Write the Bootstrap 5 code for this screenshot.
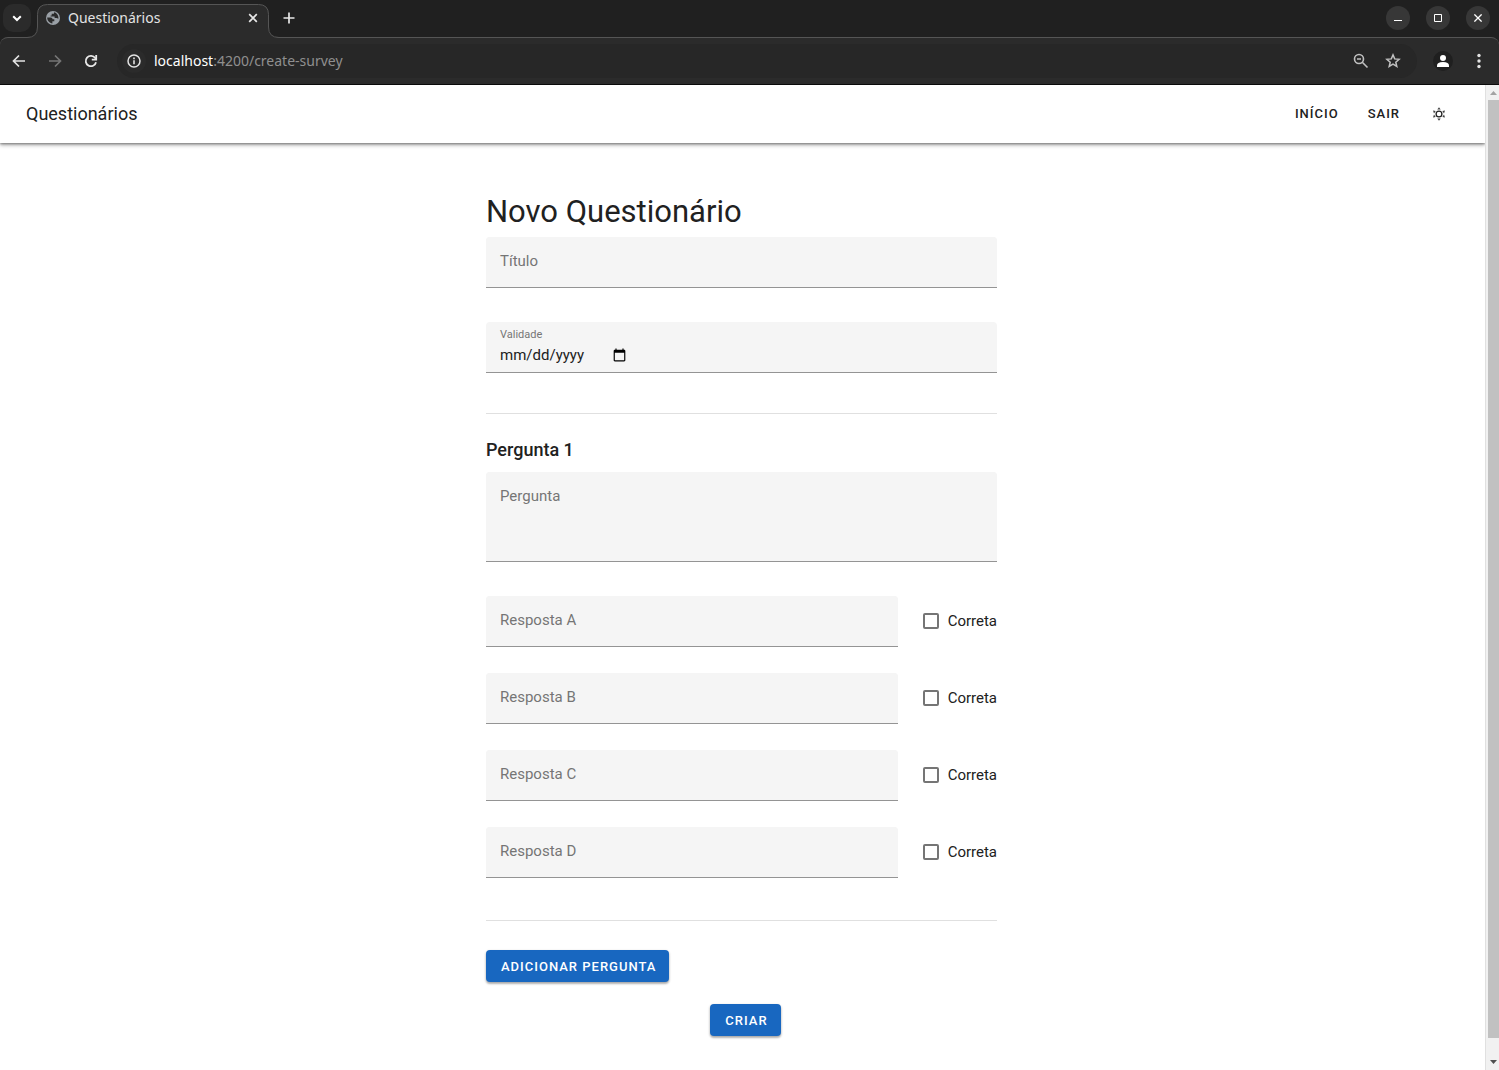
<!DOCTYPE html>
<html lang="pt-BR">
<head>
<meta charset="utf-8">
<meta name="viewport" content="width=device-width, initial-scale=1">
<title>Questionários</title>
<link href="https://cdn.jsdelivr.net/npm/bootstrap@5.3.0/dist/css/bootstrap.min.css" rel="stylesheet">
<style>
  body { font-family: Roboto, "Liberation Sans", sans-serif; font-size: 15px; line-height: 20px; color: #212121; background: #fff; }
  svg { display: block; }

  /* browser window */
  .browser-top { background: #202020; color: #e3e3e3; font-family: "Noto Sans", sans-serif; font-size: 14px; }
  .tab-strip { height: 37px; padding: 0 9px 1px 3px; }
  .ghost-btn { background: transparent; border: 0; padding: 0; color: inherit; display: flex; align-items: center; justify-content: center; flex: none; }
  .tab-search { width: 28px; height: 28px; border-radius: 10px; background: #2b2b2b; }
  .tab-item { width: 252px; height: 37px; margin-left: -4px; padding: 0 18px 1px 19px; }
  .tab-outline { position: absolute; left: 0; top: 0; }
  .tab-close { width: 16px; height: 16px; }
  .tab-add { margin-left: 2px; }
  .window-btn { width: 24px; height: 24px; border-radius: 50%; background: #373737; color: #fff; }
  .tool-row { height: 48px; background: #2b2b2b; border-top: 1px solid #555; border-bottom: 1px solid #0c0c0c; border-radius: 8px 8px 0 0; padding: 0 2px 0 1px; }
  .tool-btn { width: 36px; height: 34px; }
  .address-bar { height: 34px; border-radius: 17px; background: #272727; padding: 0 8px 0 5px; margin: 0 8px; }
  .address-btn { width: 32px; height: 34px; color: #c0c0c0; }
  .info-btn { width: 24px; height: 24px; border-radius: 50%; background: #2b2b2b; }
  .url-rest { color: #8f8f8f; }

  /* application */
  .app-bar { height: 58px; padding: 0 28px 0 26px; box-shadow: 0 2px 4px rgba(0,0,0,.35), 0 1px 2px rgba(0,0,0,.3); background: #fff; }
  .app-name { font-size: 18px; line-height: 24px; color: #212121; }
  .caps { font-size: 13px; line-height: 16px; font-weight: 500; letter-spacing: 1px; text-transform: uppercase; }
  .app-links { gap: 29px; margin-right: 21px; }
  .app-link { color: #212121; text-decoration: none; }
  .app-toggle { width: 36px; height: 36px; color: #212121; }
  .app-main { padding-right: 2px; }
  .survey-form { width: 511px; max-width: 100%; padding: 51px 0 34px; }
  .page-title { font-size: 31px; line-height: 36px; font-weight: 400; margin: 0 0 7px; }
  .question-title { font-size: 18px; line-height: 24px; font-weight: 500; margin: 24px 0 10px; }
  .rule { height: 1px; margin: 40px 0 0; border: 0; background: #e0e0e0; opacity: 1; }
  .rule-end { margin: 42px 0 29px; }

  .filled, .filled > .form-control { background: #f5f5f5; border-radius: 4px 4px 0 0; }
  .filled > .form-control, .date-box { height: 51px; min-height: 51px; border: 0; border-bottom: 1px solid #949494; box-shadow: none; color: #212121; }
  .filled > .form-control { padding: 20px 14px 6px; font-size: 15px; line-height: 20px; }
  .filled > .form-control.long-text { height: 90px; resize: none; }
  .form-floating.filled > label { padding: 13px; height: auto; font-size: 15px; line-height: 20px; color: #757575; }
  .date-box { padding: 7px 14px 0; }
  .date-box label { font-size: 11px; line-height: 12px; color: #757575; }
  .date-box input { align-self: flex-start; width: 129px; height: 28px; padding: 0; border: 0; background: transparent; font-size: 15px; line-height: 28px; color: #212121; }
  .stack-gap { margin-top: 34px; }
  .answers { gap: 26px; }
  .tick { gap: 9px; padding: 0; margin: 0 0 0 25px; min-height: 0; height: 49px; align-self: flex-start; }
  .tick .form-check-input { width: 16px; height: 16px; margin: 0; float: none; border: 2px solid #757575; border-radius: 2px; }
  .action-btn { height: 32px; padding: 1px 13px 0 15px; border: 0; border-radius: 4px; background: #1867c0; color: #fff; box-shadow: 0 2px 2px rgba(0,0,0,.22), 0 1px 3px rgba(0,0,0,.2); }
  .submit-row { margin-top: 22px; }

  .scroll-track { width: 14px; background: #f1f1f1; border-left: 1px solid #e0e0e0; }
  .scroll-arrow { height: 15px; padding-right: 2px; }
  .scroll-end { height: 32px; padding: 22px 2px 0 0; }
  .scroll-thumb { width: 11px; background: #c1c1c1; }
</style>
<script src="https://cdn.jsdelivr.net/npm/bootstrap@5.3.0/dist/js/bootstrap.bundle.min.js"></script>
</head>
<body class="d-flex flex-column min-vh-100">

<header class="browser-top">
  <div class="tab-strip d-flex align-items-center">
    <button class="ghost-btn tab-search" aria-label="Pesquisar guias"><svg width="12" height="12" viewBox="0 0 12 12" fill="none" stroke="#fff" stroke-width="2"><path d="M2.2 4.2 6 8l3.8-3.8"/></svg></button>
    <div class="tab-item position-relative d-flex align-items-center align-self-start">
      <svg class="tab-outline" width="252" height="38" viewBox="0 0 252 38"><path d="M0 38V37.5Q10.500 37.500 10.500 27V14.500Q10.500 4.500 20.500 4.500H231.500Q241.500 4.500 241.500 14.500V27Q241.500 37.500 252 37.500V38Z" fill="#2b2b2b"/><path d="M0 37.500Q10.500 37.500 10.500 27V14.500Q10.500 4.500 20.500 4.500H231.500Q241.500 4.500 241.500 14.500V27Q241.500 37.500 252 37.500" fill="none" stroke="#555"/></svg>
      <svg class="position-relative flex-shrink-0" width="14" height="14" viewBox="0 0 14 14"><circle cx="7" cy="7" r="7" fill="#9aa0a6"/><path d="M1.200 6.500h3.500q1.900 0 1.900 1.800h1.700v1.900H6.400v2.200C3.500 12.300 1.200 9.600 1.200 6.500ZM8 1.200v1.500H5.700v1.700H4.600V5.600h4v1.500h2l1.800.6C12.800 4.500 10.800 1.800 8 1.200Z" fill="#2b2b2b"/></svg>
      <span class="position-relative ms-2 flex-grow-1">Questionários</span>
      <button class="ghost-btn tab-close position-relative" aria-label="Fechar guia"><svg width="10" height="10" viewBox="0 0 10 10" stroke="#e8e8e8" stroke-width="1.700"><path d="m1.200 1.200 7.600 7.600m0-7.600-7.600 7.600"/></svg></button>
    </div>
    <button class="ghost-btn tab-close tab-add" aria-label="Nova guia"><svg width="12" height="12" viewBox="0 0 12 12" stroke="#e8e8e8" stroke-width="1.700"><path d="M6 .5v11M.5 6h11"/></svg></button>
    <div class="d-flex gap-3 ms-auto">
      <button class="ghost-btn window-btn" aria-label="Minimizar"><svg width="10" height="10" viewBox="0 0 10 10"><path d="M1 7h8v1H1z" fill="#fff"/></svg></button>
      <button class="ghost-btn window-btn" aria-label="Maximizar"><svg width="8" height="8" viewBox="0 0 8 8"><path d="M.5.5h7v7h-7z" fill="none" stroke="#fff"/></svg></button>
      <button class="ghost-btn window-btn" aria-label="Fechar"><svg width="8" height="8" viewBox="0 0 8 8" stroke="#fff" stroke-width="1.300"><path d="m.4.4 7.200 7.200m0-7.200L.4 7.600"/></svg></button>
    </div>
  </div>
  <div class="tool-row d-flex align-items-center">
    <button class="ghost-btn tool-btn" aria-label="Voltar"><svg width="14" height="14" viewBox="0 0 14 14" fill="none" stroke="#e3e3e3" stroke-width="1.700"><path d="M13 7H2M7 1.500 1.500 7 7 12.500"/></svg></button>
    <button class="ghost-btn tool-btn" aria-label="Avançar"><svg width="14" height="14" viewBox="0 0 14 14" fill="none" stroke="#757575" stroke-width="1.700"><path d="M1 7h11M7 1.500 12.500 7 7 12.500"/></svg></button>
    <button class="ghost-btn tool-btn" aria-label="Recarregar"><svg width="14" height="14" viewBox="0 0 14 14" fill="none" stroke="#e8e8e8" stroke-width="1.800"><path d="M12 8.200A5.200 5.200 0 1 1 11.200 4L12.500 5.500"/><path d="M12.200 1v4.700H7.800"/></svg></button>
    <div class="address-bar d-flex align-items-center flex-grow-1">
      <button class="ghost-btn info-btn" aria-label="Informações do site"><svg width="14" height="14" viewBox="0 0 14 14"><circle cx="7" cy="7" r="6" fill="none" stroke="#e3e3e3" stroke-width="1.500"/><path d="M6.200 6.200h1.600v4H6.200zM6.200 3.600h1.600v1.600H6.200z" fill="#e3e3e3"/></svg></button>
      <div class="ms-2 flex-grow-1 text-nowrap" role="textbox" aria-label="Endereço"><span class="text-white">localhost</span><span class="url-rest">:4200/create-survey</span></div>
      <button class="ghost-btn address-btn" aria-label="Zoom"><svg width="16" height="16" viewBox="0 0 16 16" fill="none" stroke="currentColor" stroke-width="1.600"><circle cx="6" cy="6" r="4.500"/><path d="m9.300 9.300 5.200 5.200M4 6h4"/></svg></button>
      <button class="ghost-btn address-btn" aria-label="Favoritar"><svg width="16" height="16" viewBox="0 0 16 16" fill="none" stroke="currentColor" stroke-width="1.500"><path d="m8 1.900 1.700 4 4.400.4-3.300 2.900 1 4.300L8 11.200l-3.800 2.300 1-4.300-3.300-2.900 4.400-.4z"/></svg></button>
    </div>
    <button class="ghost-btn tool-btn" aria-label="Perfil"><svg width="20" height="20" viewBox="0 0 20 20"><circle cx="10" cy="10" r="10" fill="#1f1f1f"/><circle cx="10" cy="7" r="3" fill="#fff"/><path d="M4 16v-1.500Q4 11 10 11t6 3.500V16Z" fill="#fff"/></svg></button>
    <button class="ghost-btn tool-btn" aria-label="Menu"><svg width="4" height="16" viewBox="0 0 4 16" fill="#e3e3e3"><circle cx="2" cy="2.500" r="1.700"/><circle cx="2" cy="8" r="1.700"/><circle cx="2" cy="13.500" r="1.700"/></svg></button>
  </div>
</header>

<div class="d-flex flex-grow-1">
  <div class="flex-grow-1">
    <nav class="app-bar d-flex align-items-center" aria-label="Principal">
      <a class="app-name text-decoration-none me-auto" href="#">Questionários</a>
      <div class="app-links d-flex">
        <a class="app-link caps" href="#">Início</a>
        <a class="app-link caps" href="#">Sair</a>
      </div>
      <button class="ghost-btn app-toggle" aria-label="Alternar tema"><svg width="14" height="14" viewBox="0 0 14 14"><circle cx="7" cy="7" r="2.900" fill="none" stroke="currentColor" stroke-width="1.300"/><path d="M7 .3 8.700 2.600H5.300ZM7 13.700l1.700-2.300H5.300ZM1 3.500l2.700.5L2 6.500ZM13 3.500l-2.700.5L12 6.500ZM1 10.500l2.700-.5L2 7.500ZM13 10.500l-2.700-.5L12 7.500Z" fill="currentColor" opacity=".85"/></svg></button>
    </nav>

    <main class="app-main d-flex justify-content-center">
      <form class="survey-form">
        <h1 class="page-title">Novo Questionário</h1>
        <div class="form-floating filled">
          <input type="text" class="form-control" id="titulo" placeholder=" ">
          <label for="titulo">Título</label>
        </div>
        <div class="filled date-box stack-gap d-flex flex-column">
          <label for="validade">Validade</label>
          <input type="date" id="validade">
        </div>
        <hr class="rule">

        <h2 class="question-title">Pergunta 1</h2>
        <div class="form-floating filled">
          <textarea class="form-control long-text" id="pergunta" placeholder=" "></textarea>
          <label for="pergunta">Pergunta</label>
        </div>

        <div class="answers stack-gap d-flex flex-column">
          <div class="d-flex align-items-center">
            <div class="form-floating filled flex-grow-1"><input type="text" class="form-control" id="ra" placeholder=" "><label for="ra">Resposta A</label></div>
            <div class="form-check tick d-flex align-items-center"><input class="form-check-input" type="checkbox" id="ca"><label for="ca">Correta</label></div>
          </div>
          <div class="d-flex align-items-center">
            <div class="form-floating filled flex-grow-1"><input type="text" class="form-control" id="rb" placeholder=" "><label for="rb">Resposta B</label></div>
            <div class="form-check tick d-flex align-items-center"><input class="form-check-input" type="checkbox" id="cb"><label for="cb">Correta</label></div>
          </div>
          <div class="d-flex align-items-center">
            <div class="form-floating filled flex-grow-1"><input type="text" class="form-control" id="rc" placeholder=" "><label for="rc">Resposta C</label></div>
            <div class="form-check tick d-flex align-items-center"><input class="form-check-input" type="checkbox" id="cc"><label for="cc">Correta</label></div>
          </div>
          <div class="d-flex align-items-center">
            <div class="form-floating filled flex-grow-1"><input type="text" class="form-control" id="rd" placeholder=" "><label for="rd">Resposta D</label></div>
            <div class="form-check tick d-flex align-items-center"><input class="form-check-input" type="checkbox" id="cd"><label for="cd">Correta</label></div>
          </div>
        </div>
        <hr class="rule rule-end">

        <button type="button" class="action-btn caps d-block">Adicionar pergunta</button>
        <div class="submit-row d-flex justify-content-center ps-2">
          <button type="submit" class="action-btn caps">Criar</button>
        </div>
      </form>
    </main>
  </div>

  <div class="scroll-track d-flex flex-column align-items-end flex-shrink-0" aria-hidden="true">
    <div class="scroll-arrow d-flex align-items-center"><svg width="7" height="4" viewBox="0 0 7 4"><path d="M0 4 3.500 0 7 4Z" fill="#a3a3a3"/></svg></div>
    <div class="scroll-thumb flex-grow-1"></div>
    <div class="scroll-end"><svg width="7" height="4" viewBox="0 0 7 4"><path d="m0 0 3.500 4L7 0Z" fill="#505050"/></svg></div>
  </div>
</div>

</body>
</html>
